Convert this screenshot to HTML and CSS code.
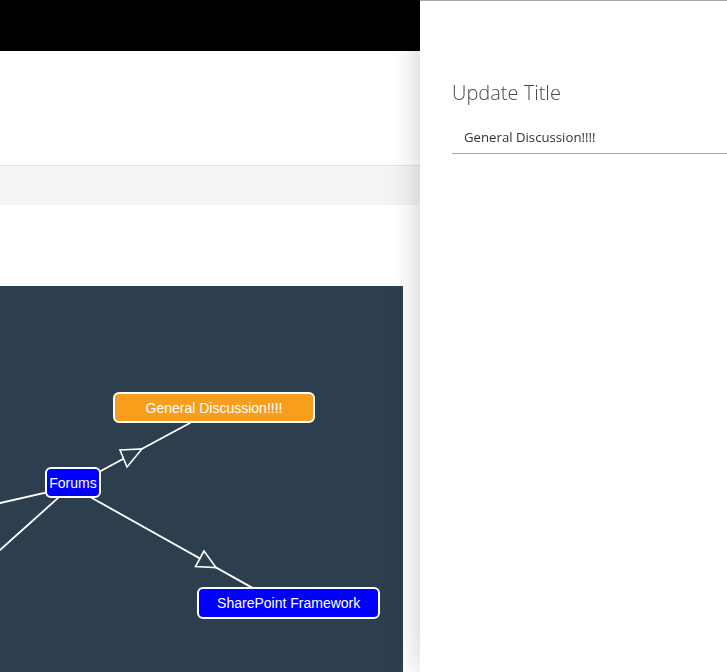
FILE: index.html
```html
<!DOCTYPE html>
<html lang="en">
<head>
<meta charset="utf-8">
<title>Update Title</title>
<link rel="stylesheet" href="styles.css">
</head>
<body>
<div class="app">
  <header class="topbar"></header>
  <div class="hero"></div>
  <div class="commandbar"></div>
  <div class="spacer"></div>
  <div class="canvas">
    <svg class="graph" width="403" height="386" viewBox="0 0 403 386" xmlns="http://www.w3.org/2000/svg">
      <g stroke="#ffffff" stroke-width="1.8" fill="none" stroke-linecap="round">
        <line x1="0" y1="217" x2="60" y2="203.3"/>
        <line x1="0" y1="264" x2="62" y2="208.4"/>
        <line x1="90" y1="190.8" x2="190" y2="137"/>
        <line x1="80" y1="205.3" x2="252" y2="301.6"/>
      </g>
      <g stroke="#ffffff" stroke-width="1.6" fill="#2d3e4f" stroke-linejoin="miter">
        <polygon points="120,164 142,163 127,181"/>
        <polygon points="204,265 195.5,280.5 216,281.5"/>
      </g>
      <g stroke="#ffffff" stroke-width="2">
        <rect x="114" y="107" width="200" height="29" rx="5" fill="#f99d1c"/>
        <rect x="46" y="182" width="54" height="29" rx="5" fill="#0000ff"/>
        <rect x="198" y="302" width="181" height="30" rx="5" fill="#0000ff"/>
      </g>
      <g class="label" fill="#ffffff" text-anchor="middle">
        <text x="214" y="126.6">General Discussion!!!!</text>
        <text x="73" y="202.3">Forums</text>
        <text x="288.7" y="322.3">SharePoint Framework</text>
      </g>
    </svg>
  </div>
</div>
<aside class="panel">
  <h2 class="panel-title">Update Title</h2>
  <div class="field">
    <input class="field-input" type="text" value="General Discussion!!!!">
  </div>
</aside>
</body>
</html>
```
FILE: styles.css
```css
html, body {
  margin: 0;
  padding: 0;
  height: 100%;
  overflow: hidden;
  background: #ffffff;
}

.app {
  display: flex;
  flex-direction: column;
  height: 672px;
}

.topbar {
  height: 51px;
  background: #000000;
  flex: none;
}

.hero {
  height: 114px;
  flex: none;
  background: #ffffff;
}

.commandbar {
  height: 39px;
  flex: none;
  border-top: 1px solid #e3e3e3;
  background: #f4f4f4;
}

.spacer {
  height: 81px;
  flex: none;
}

.canvas {
  width: 403px;
  flex: 1;
  background: #2d3e4f;
  overflow: hidden;
}

.graph {
  display: block;
}

.label text {
  font-family: "Liberation Sans", Arial, sans-serif;
  font-size: 14px;
}

.panel {
  position: fixed;
  top: 0;
  right: 0;
  bottom: 0;
  width: 307px;
  box-sizing: border-box;
  background: #ffffff;
  border-top: 1px solid #a8a8a8;
  box-shadow: 0 0 30px rgba(0, 0, 0, 0.2);
  padding: 76px 0 0 32px;
  font-family: "Open Sans", "Segoe UI", sans-serif;
}

.panel-title {
  margin: 0;
  font-size: 20px;
  line-height: 32px;
  font-weight: 300;
  color: #484848;
}

.field {
  margin-top: 12px;
}

.field-input {
  display: block;
  width: 100%;
  height: 33px;
  box-sizing: border-box;
  border: none;
  border-bottom: 1px solid #a6a6a6;
  padding: 0 12px;
  margin: 0;
  font-family: "Open Sans", "Segoe UI", sans-serif;
  font-size: 13.2px;
  color: #333333;
  background: transparent;
  outline: none;
}
```
